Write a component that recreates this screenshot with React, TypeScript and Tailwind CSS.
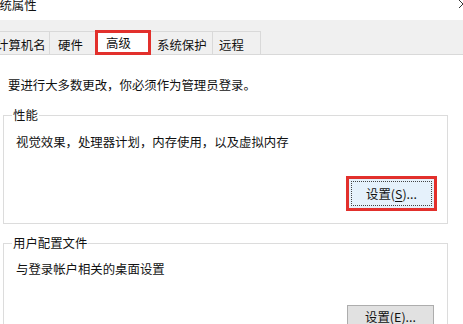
import React from "react";

const font = { fontFamily: '"Noto Sans CJK SC", "Noto Sans", sans-serif' };

function Tab({ label, width, pl = 6 }: { label: string; width: number; pl?: number }) {
  return (
    <div
      className="h-[23px] border border-b-0 border-[#d9d9d9] bg-[#f0f0f0] flex items-center text-[12.4px] leading-[12px] text-[#111] pt-[3px] -ml-px"
      style={{ width, paddingLeft: pl }}
    >
      {label}
    </div>
  );
}

export default function App() {
  return (
    <div className="w-[463px] h-[324px] overflow-hidden bg-white text-[#111]" style={font}>
      {/* title bar */}
      <div className="h-[20px] flex justify-between items-start overflow-hidden">
        <div className="ml-[-13px] mt-[-1px] text-[12.4px] leading-[12px]">系统属性</div>
        <svg width="10" height="10" viewBox="0 0 10 10" className="mr-[-5px] mt-[-1px]">
          <path d="M1 1 L9 9 M9 1 L1 9" stroke="#333" strokeWidth="1" />
        </svg>
      </div>
      {/* tab band */}
      <div className="h-[35px] bg-[#f0f0f0] border-b border-[#d9d9d9] flex items-end pl-0 ml-[-10px]">
        <Tab label="计算机名" width={61} />
        <Tab label="硬件" width={48} pl={8} />
        <div className="w-[56px] h-[25px] mb-[-1px] -ml-[2px] border-[3px] border-[#e2302c] bg-white flex items-start justify-start pl-[8px] pt-[4px] text-[12.4px] leading-[12px] relative z-10">
          高级
        </div>
        <Tab label="系统保护" width={63} pl={6} />
        <Tab label="远程" width={49} pl={6} />
      </div>
      {/* content */}
      <div className="flex flex-col">
        <p className="mt-[24px] ml-[8px] text-[12.4px] leading-[12px]">要进行大多数更改，你必须作为管理员登录。</p>

        <fieldset className="mt-[17px] ml-[3px] w-[445px] h-[116px] border border-[#dcdcdc] flex flex-col">
          <legend className="ml-[8px] px-px text-[12.4px] leading-[14px]">性能</legend>
          <p className="mt-[14px] ml-[12px] text-[12.4px] leading-[12px]">视觉效果，处理器计划，内存使用，以及虚拟内存</p>
          <div className="mt-[28px] flex justify-end pr-[10px]">
            <div className="w-[91px] h-[35px] border-[3px] border-[#e2302c] bg-[#e5f1fb] p-[2px]">
              <div className="w-full h-full border border-dotted border-[#444] flex items-center justify-center text-[12.4px] leading-[12px]">
                设置(<span className="underline underline-offset-2">S</span>)...
              </div>
            </div>
          </div>
        </fieldset>

        <fieldset className="mt-[12px] ml-[3px] w-[445px] h-[120px] border border-[#dcdcdc] flex flex-col">
          <legend className="ml-[8px] px-px text-[12.4px] leading-[14px]">用户配置文件</legend>
          <p className="mt-[13px] ml-[12px] text-[12.4px] leading-[12px]">与登录帐户相关的桌面设置</p>
          <div className="mt-[30px] flex justify-end pr-[13px]">
            <div className="w-[87px] h-[24px] border border-[#adadad] bg-[#e1e1e1] flex items-center justify-center text-[12.4px] leading-[12px]">
              设置(<span className="underline underline-offset-2">E</span>)...
            </div>
          </div>
        </fieldset>
      </div>
    </div>
  );
}
